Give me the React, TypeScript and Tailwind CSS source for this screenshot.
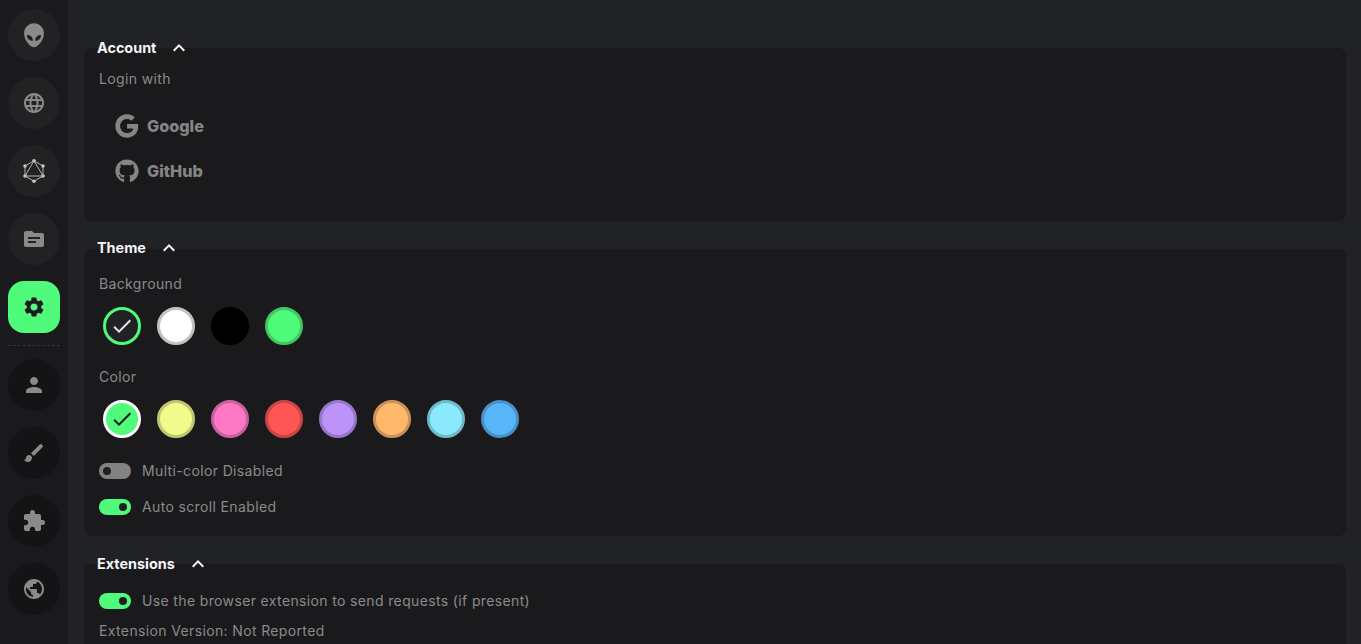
import React from 'react';
import { MdBrush, MdExpandLess, MdExtension, MdLanguage, MdPerson, MdPublic, MdSettings, MdTopic, MdCheck } from 'react-icons/md';
import { FaGithub } from 'react-icons/fa';
import { RiAliensFill, RiGoogleFill } from 'react-icons/ri';

const FONT = "font-['Inter','Noto_Sans',sans-serif]";
const LABEL = 'text-[14px] tracking-[0.36px] text-[#8a8a8a] leading-[20px]';

const GRAPH_NODES = [[12, 1.8], [21, 7], [21, 17], [12, 22.2], [3, 17], [3, 7]];

// thin outline graph logo, the icon packs only have a heavy one
const GraphIcon = ({ size = 24 }: { size?: number }) => (
  <svg width={size} height={size} viewBox="0 0 24 24" fill="none" stroke="currentColor" strokeWidth="0.9">
    <path d="M12 1.8 21 7v10l-9 5.2L3 17V7z" />
    <path d="M12 1.8 21 17H3z" />
    {GRAPH_NODES.map(([cx, cy]) => (
      <circle key={`${cx}-${cy}`} cx={cx} cy={cy} r="1.8" fill="currentColor" stroke="none" />
    ))}
  </svg>
);

const NavButton = ({ icon: Icon, size = 24, className }: { icon: React.ElementType; size?: number; className: string }) => (
  <div className={`w-[52px] h-[52px] flex items-center justify-center ${className}`}>
    <Icon size={size} />
  </div>
);

const Section = ({ title, children, className, outer = '' }: { title: string; children: React.ReactNode; className: string; outer?: string }) => (
  <section className={outer}>
    <div className="h-[20px] flex items-center gap-[11px] pl-[13px] relative z-10 -mb-[10px]">
      <span className="text-[14.4px] font-bold text-[#f4f4f5]">{title}</span>
      <MdExpandLess size={24} className="text-[#f4f4f5]" />
    </div>
    <div className={`bg-[#1a1a1d] rounded-[8px] ${className}`}>{children}</div>
  </section>
);

const Swatch = ({ bg, ring, check, checkColor }: { bg: string; ring: string; check?: boolean; checkColor?: string }) => (
  <div className={`w-[38px] h-[38px] rounded-full border-[3px] flex items-center justify-center ${bg} ${ring}`}>
    {check && <MdCheck size={24} className={checkColor} />}
  </div>
);

const Toggle = ({ on, label }: { on: boolean; label: string }) => (
  <div className="flex items-center gap-[11px] h-[20px]">
    <div className={`w-[32px] h-[16px] rounded-full flex items-center px-[4px] ${on ? 'bg-[#50fa7b] justify-end' : 'bg-[#828282] justify-start'}`}>
      <div className="w-[8px] h-[8px] rounded-full bg-[#1f2023]" />
    </div>
    <span className={LABEL}>{label}</span>
  </div>
);

export default function App() {
  return (
    <div className={`${FONT} flex h-[644px] overflow-hidden bg-[#202225]`}>
      <nav className="w-[68px] shrink-0 bg-[#1a1a1d] flex flex-col items-center pt-[9px]">
        <div className="flex flex-col gap-[16px]">
          <NavButton icon={RiAliensFill} size={28} className="rounded-full bg-[#222224] text-[#8a8a8a]" />
          <NavButton icon={MdLanguage} className="rounded-full bg-[#222224] text-[#8a8a8a]" />
          <NavButton icon={GraphIcon} className="rounded-full bg-[#222224] text-[#c4c4c4]" />
          <NavButton icon={MdTopic} className="rounded-full bg-[#222224] text-[#8a8a8a]" />
          <NavButton icon={MdSettings} className="rounded-[16px] bg-[#50fa7b] text-[#1c1c1f]" />
        </div>
        <div className="w-[52px] mt-[12px] mb-[13px] border-t border-dashed border-[#333335]" />
        <div className="flex flex-col gap-[16px]">
          <NavButton icon={MdPerson} className="rounded-full bg-[#141416] text-[#8a8a8a]" />
          <NavButton icon={MdBrush} className="rounded-full bg-[#141416] text-[#8a8a8a]" />
          <NavButton icon={MdExtension} className="rounded-full bg-[#141416] text-[#8a8a8a]" />
          <NavButton icon={MdPublic} className="rounded-full bg-[#141416] text-[#8a8a8a]" />
        </div>
      </nav>
      <main className="flex-1 pl-[16px] pr-[15px] pt-[38px] flex flex-col gap-[17px]">
        <Section title="Account" className="h-[173px] px-[15px] pt-[21px]">
          <div className={LABEL}>Login with</div>
          <div className="mt-[25px] pl-[16px] flex flex-col gap-[21px] text-[#858585] font-extrabold text-[16.2px]">
            <div className="flex items-center gap-[8px] h-[24px]"><RiGoogleFill size={28} className="-mx-[2px]" /><span>Google</span></div>
            <div className="flex items-center gap-[8px] h-[24px]"><FaGithub size={24} /><span>GitHub</span></div>
          </div>
        </Section>
        <Section title="Theme" className="mt-[1px] h-[287px] px-[15px] pt-[25px]">
          <div className={LABEL}>Background</div>
          <div className="mt-[13px] pl-[4px] flex gap-[16px]">
            <Swatch bg="bg-[#202225]" ring="border-[#50fa7b]" check checkColor="text-[#e4e4e4]" />
            <Swatch bg="bg-white" ring="border-[#c2c2c2]" />
            <Swatch bg="bg-black" ring="border-black" />
            <Swatch bg="bg-[#50fa7b]" ring="border-[#41c863]" />
          </div>
          <div className={`mt-[22px] ${LABEL}`}>Color</div>
          <div className="mt-[13px] pl-[4px] flex gap-[16px]">
            <Swatch bg="bg-[#50fa7b]" ring="border-white" check checkColor="text-[#1a1a1d]" />
            <Swatch bg="bg-[#f1fa8c]" ring="border-[#bfc671]" />
            <Swatch bg="bg-[#ff79c6]" ring="border-[#ca619e]" />
            <Swatch bg="bg-[#ff5555]" ring="border-[#ca4546]" />
            <Swatch bg="bg-[#bd93f9]" ring="border-[#9676c6]" />
            <Swatch bg="bg-[#ffb86c]" ring="border-[#ca9358]" />
            <Swatch bg="bg-[#8be9fd]" ring="border-[#70b9c9]" />
            <Swatch bg="bg-[#57b5f9]" ring="border-[#4791c6]" />
          </div>
          <div className="mt-[23px] flex flex-col gap-[16px]">
            <Toggle on={false} label="Multi-color Disabled" />
            <Toggle on label="Auto scroll Enabled" />
          </div>
        </Section>
        <Section title="Extensions" outer="mt-[1px]" className="h-[120px] px-[15px] pt-[27px]">
          <Toggle on label="Use the browser extension to send requests (if present)" />
          <div className={`mt-[10px] ${LABEL}`}>Extension Version: Not Reported</div>
        </Section>
      </main>
    </div>
  );
}
